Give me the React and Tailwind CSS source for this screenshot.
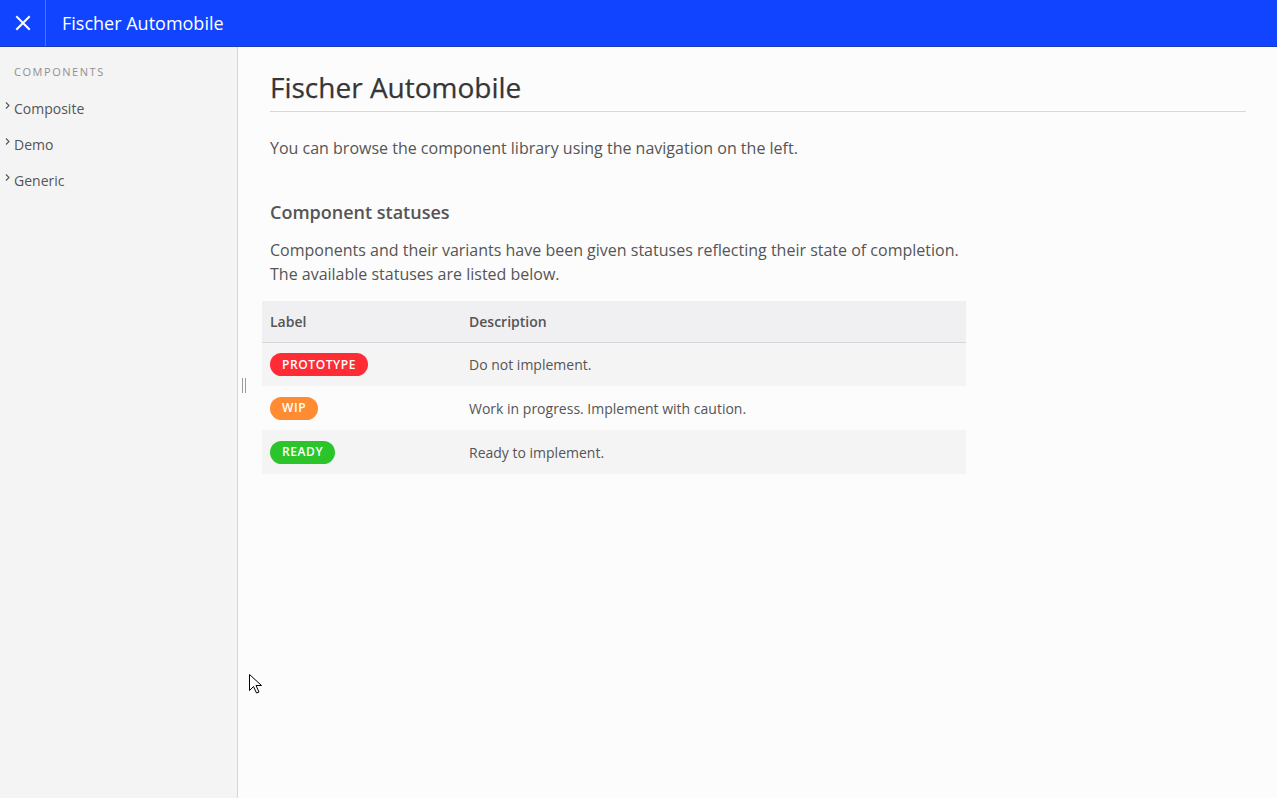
import React from 'react';

const statuses = [
  { label: 'PROTOTYPE', color: 'bg-[#ff2b35]', desc: 'Do not implement.', stripe: true },
  { label: 'WIP', color: 'bg-[#ff8b33]', desc: 'Work in progress. Implement with caution.', stripe: false },
  { label: 'READY', color: 'bg-[#2bc52b]', desc: 'Ready to implement.', stripe: true },
];

const navItems = ['Composite', 'Demo', 'Generic'];

export default function App() {
  return (
    <div className="h-[798px] w-full flex flex-col font-['Open_Sans',sans-serif] bg-[#fcfcfc] overflow-hidden">
      {/* Header */}
      <header className="h-[47px] flex items-stretch bg-[#1144ff] border-b border-[#1a3bb8] shrink-0">
        <button className="w-[46px] flex items-center justify-center border-r border-[#4d73ff] text-white">
          <svg width="16" height="16" viewBox="0 0 16 16" fill="none" stroke="currentColor" strokeWidth="2" strokeLinecap="square">
            <path d="M2 2L14 14M14 2L2 14" />
          </svg>
        </button>
        <div className="flex items-center pl-[16px] text-white text-[18px]">Fischer Automobile</div>
      </header>

      <div className="flex flex-1 min-h-0">
        {/* Sidebar */}
        <aside className="w-[238px] shrink-0 bg-[#f4f4f4] border-r border-[#d6d6d6] pt-[16px]">
          <div className="pl-[14px] text-[11px] tracking-[0.14em] text-[#909090] leading-[18px]">COMPONENTS</div>
          <ul className="mt-[9px]">
            {navItems.map((item) => (
              <li key={item} className="flex items-center h-[36px] text-[14px] text-[#555]">
                <span className="w-[14px] flex justify-start pl-[5px] -mt-[6px]">
                  <svg width="5" height="7" viewBox="0 0 5 7" fill="none" stroke="#555" strokeWidth="1.1">
                    <path d="M1 0.5L4 3.5L1 6.5" />
                  </svg>
                </span>
                {item}
              </li>
            ))}
          </ul>
        </aside>

        {/* Main */}
        <main className="relative flex-1 pl-[32px] pr-[31px] pt-[22px]">
          <div className="absolute left-[4px] top-[331px] flex gap-[2px]">
            <span className="w-px h-[15px] bg-[#9a9a9a]" />
            <span className="w-px h-[15px] bg-[#9a9a9a]" />
          </div>
          <svg className="absolute left-[11px] top-[627px]" width="13" height="20" viewBox="0 0 13 20">
            <path d="M0.5 0.5V16.5L4.5 12.5L7.5 19L10 18L7 11.5H12.5Z" fill="#fff" stroke="#000" strokeWidth="1" strokeLinejoin="round" />
          </svg>

          <h1 className="text-[28px] leading-[36px] text-[#363636] pb-[6px] border-b border-[#d8d8d8] [-webkit-text-stroke:0.25px_#363636]">Fischer Automobile</h1>
          <p className="mt-[24px] text-[16px] leading-[24px] text-[#555]">
            You can browse the component library using the navigation on the left.
          </p>
          <h2 className="mt-[39px] text-[18px] leading-[26px] font-semibold text-[#555]">Component statuses</h2>
          <p className="mt-[13px] text-[16px] leading-[24px] text-[#555]">
            Components and their variants have been given statuses reflecting their state of completion.
            <br />
            The available statuses are listed below.
          </p>

          <table className="mt-[15px] -ml-[8px] w-[704px] border-collapse text-[14px] text-[#555]">
            <thead>
              <tr className="bg-[#f0f0f2] border-b border-[#d6d6da] h-[41px]">
                <th className="text-left font-semibold pl-[8px] w-[207px]">Label</th>
                <th className="text-left font-semibold">Description</th>
              </tr>
            </thead>
            <tbody>
              {statuses.map((s) => (
                <tr key={s.label} className={`h-[44px] ${s.stripe ? 'bg-[#f4f4f4]' : 'bg-[#fcfcfc]'}`}>
                  <td className="pl-[8px]">
                    <span className={`inline-flex items-center h-[23px] px-[12px] rounded-full text-white text-[12px] font-semibold tracking-[0.05em] ${s.color}`}>
                      {s.label}
                    </span>
                  </td>
                  <td>{s.desc}</td>
                </tr>
              ))}
            </tbody>
          </table>
        </main>
      </div>
    </div>
  );
}
